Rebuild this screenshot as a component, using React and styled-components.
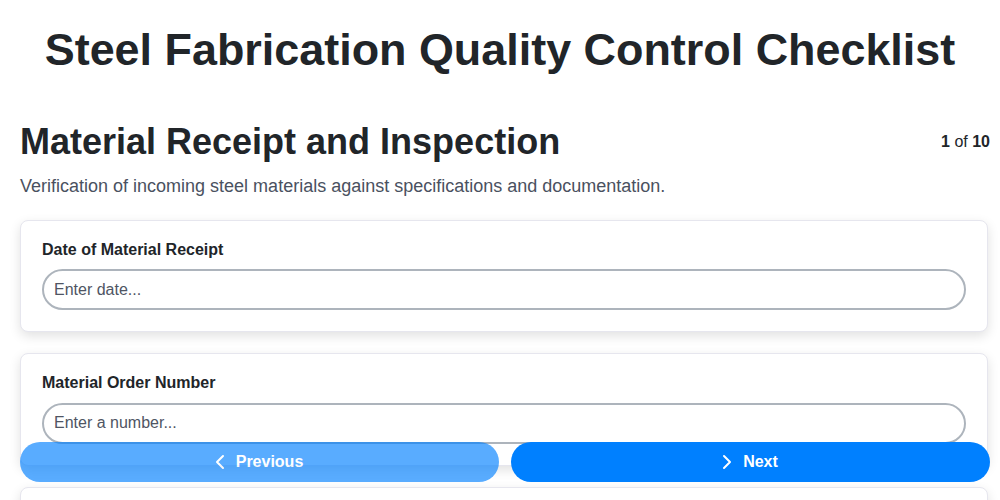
import styled, { createGlobalStyle } from "styled-components";
import { ChevronLeft, ChevronRight } from "lucide-react";

const GlobalStyle = createGlobalStyle`
body {
  margin: 0;
  background: #ffffff;
  font-family: "Liberation Sans", Arial, sans-serif;
  color: #212529;
}
`;

const Page = styled.div`
  padding: 0 10px 120px 20px;
`;

const Title = styled.h1`
  margin: 24px 0 45px;
  text-align: center;
  font-size: 44.9px;
  font-weight: bold;
  line-height: 52px;
  color: #212529;
`;

const SectionHeader = styled.div`
  display: flex;
  justify-content: space-between;
  align-items: flex-start;
`;

const SectionTitle = styled.h2`
  margin: 0;
  font-size: 36px;
  line-height: 41px;
  font-weight: bold;
  color: #212529;
`;

const Counter = styled.div`
  font-size: 16px;
  line-height: 18px;
  margin-top: 12px;
  color: #212529;

  b {
    font-weight: bold;
  }
`;

const Description = styled.p`
  margin: 14px 0 24px;
  font-size: 18px;
  line-height: 20px;
  color: #4a5160;
`;

const Card = styled.div`
  background: #ffffff;
  border: 1px solid #e6e6ee;
  border-radius: 8px;
  padding: 20px 21px 21px;
  margin: 0 2px 21px 0;
  box-shadow: 0 4px 12px rgba(0, 0, 0, 0.12);
`;

const Label = styled.label`
  display: block;
  font-size: 16px;
  font-weight: bold;
  line-height: 18.4px;
  margin: 0 0 10px;
  color: #212529;
`;

const Input = styled.input`
  display: block;
  width: 100%;
  height: 41px;
  box-sizing: border-box;
  border: 2px solid #adb4bc;
  border-radius: 21px;
  padding: 0 10px;
  font-family: "Liberation Sans", Arial, sans-serif;
  font-size: 16px;
  color: #212529;
  background: #ffffff;
  outline: none;

  &::placeholder {
    color: #4f5563;
  }
`;

const Nav = styled.div`
  position: fixed;
  left: 20px;
  right: 10px;
  bottom: 18px;
  display: flex;
  gap: 12px;
`;

const NavButton = styled.button`
  flex: 1;
  height: 40px;
  border: none;
  border-radius: 20px;
  padding: 0 8px 0 0;
  background: #0080ff;
  color: #ffffff;
  font-family: "Liberation Sans", Arial, sans-serif;
  font-size: 16px;
  font-weight: bold;
  display: flex;
  align-items: center;
  justify-content: center;
  gap: 4px;
  opacity: ${(p) => (p.$disabled ? 0.65 : 1)};
  cursor: pointer;
`;

const fields = [
  { label: "Date of Material Receipt", placeholder: "Enter date..." },
  { label: "Material Order Number", placeholder: "Enter a number..." },
  { label: "Material Supplier", placeholder: "Enter text..." },
];

export default function App() {
  return (
    <>
      <GlobalStyle />
      <Title>Steel Fabrication Quality Control Checklist</Title>
      <Page>
        <SectionHeader>
          <SectionTitle>Material Receipt and Inspection</SectionTitle>
          <Counter>
            <b>1</b> of <b>10</b>
          </Counter>
        </SectionHeader>
        <Description>
          Verification of incoming steel materials against specifications and documentation.
        </Description>
        {fields.map((f) => (
          <Card key={f.label}>
            <Label>{f.label}</Label>
            <Input placeholder={f.placeholder} />
          </Card>
        ))}
      </Page>
      <Nav>
        <NavButton $disabled>
          <ChevronLeft size={24} strokeWidth={2} />
          Previous
        </NavButton>
        <NavButton>
          <ChevronRight size={24} strokeWidth={2} />
          Next
        </NavButton>
      </Nav>
    </>
  );
}
